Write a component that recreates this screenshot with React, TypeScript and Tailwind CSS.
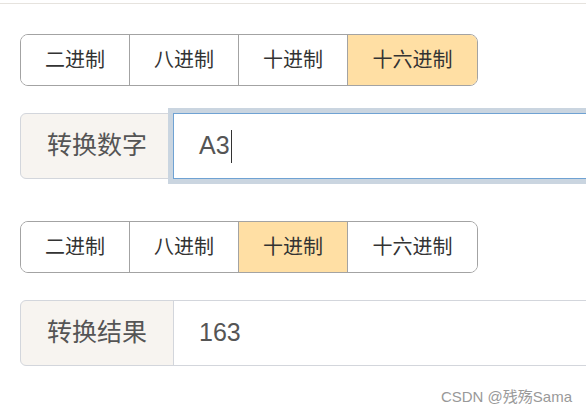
import React from "react";

const bases = ["二进制", "八进制", "十进制", "十六进制"];

const font = {
  fontFamily: '"Liberation Sans", "Noto Sans CJK SC", sans-serif',
};

const widths = ["w-[108px]", "w-[109px]", "w-[109px]", "w-[130px]"];

function BaseGroup({ active }: { active: number }) {
  return (
    <div className="flex h-[52px] w-fit rounded-[8px] border border-[#a3a3a3] overflow-hidden">
      {bases.map((b, i) => (
        <div
          key={b}
          className={
            "flex items-center justify-center text-[20px] text-[#333] " +
            (i > 0 ? "border-l border-[#a3a3a3] " : "") +
            widths[i] +
            " " +
            (i === active ? "bg-[#ffdfa4]" : "bg-white")
          }
        >
          {b}
        </div>
      ))}
    </div>
  );
}

function InputRow({
  label,
  value,
  focused,
}: {
  label: string;
  value: string;
  focused?: boolean;
}) {
  return (
    <div className="flex h-[66px]">
      <div className="flex w-[154px] shrink-0 items-center justify-center rounded-l-[6px] border border-[#d3d6dc] bg-[#f7f4f0] text-[25px] text-[#555]">
        {label}
      </div>
      <div
        className={
          "relative -ml-px flex w-[460px] shrink-0 items-center border bg-white pl-[25px] text-[25px] text-[#555] " +
          (focused
            ? "z-10 border-[#6fa2d3] shadow-[0_0_0_5px_#cad5e0]"
            : "border-[#d3d6dc] border-r-0")
        }
      >
        <span>{value}</span>
        {focused && <span className="ml-[1px] h-[33px] w-px bg-[#333]" />}
      </div>
    </div>
  );
}

export default function App() {
  return (
    <div className="relative h-[414px] w-[586px] overflow-hidden bg-white" style={font}>
      <div className="h-[4px] border-b border-[#e6e3de]" />
      <div className="flex flex-col pl-[20px] pt-[30px]">
        <BaseGroup active={3} />
        <div className="mt-[27px]">
          <InputRow label="转换数字" value="A3" focused />
        </div>
        <div className="mt-[42px]">
          <BaseGroup active={2} />
        </div>
        <div className="mt-[27px]">
          <InputRow label="转换结果" value="163" />
        </div>
        <div className="mt-[20px] pr-[14px] text-right text-[15px] text-[#999]">
          CSDN @残殇Sama
        </div>
      </div>
    </div>
  );
}
